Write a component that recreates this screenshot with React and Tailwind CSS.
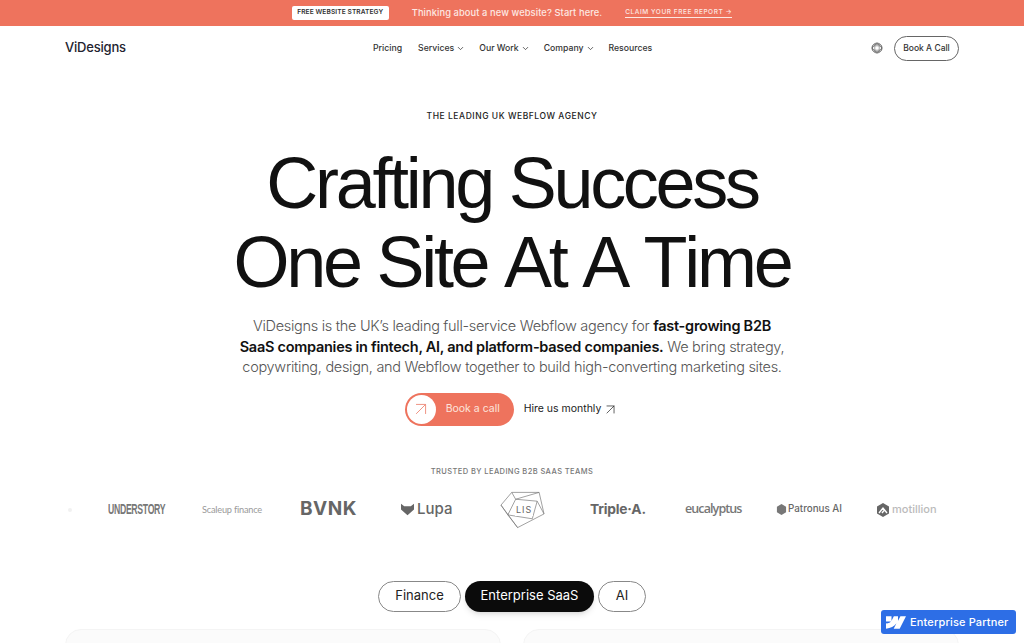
import React from 'react';
import { ArrowUpRight, ChevronDown } from 'lucide-react';

const navLinks = [
  { label: 'Pricing' },
  { label: 'Services', menu: true },
  { label: 'Our Work', menu: true },
  { label: 'Company', menu: true },
  { label: 'Resources' },
];

const Globe = () => (
  <svg viewBox="0 0 24 24" className="w-[12px] h-[12px]" fill="none" stroke="#666" strokeWidth="1.2">
    <circle cx="12" cy="12" r="10" />
    <ellipse cx="12" cy="12" rx="4.5" ry="10" />
    <ellipse cx="12" cy="12" rx="10" ry="4.5" />
    <ellipse cx="12" cy="12" rx="7.5" ry="10" transform="rotate(60 12 12)" />
    <ellipse cx="12" cy="12" rx="7.5" ry="10" transform="rotate(-60 12 12)" />
  </svg>
);

const Logos = () => (
  <div className="mt-[13px] h-[40px] flex items-center text-[#6f6f6f]">
    <div className="w-[68px]" />
    <span className="w-[40px] flex"><span className="w-[4px] h-[4px] rounded-full bg-[#f1f1f1]" /></span>
    <span className="w-[94px] text-[14px] font-bold tracking-[-0.5px] text-[#777] [font-family:'Liberation_Sans',sans-serif] scale-x-[0.62] origin-left whitespace-nowrap">UNDERSTORY</span>
    <span className="w-[98px] text-[9.2px] text-[#999] tracking-[-0.2px] [font-family:Lato,sans-serif]">Scaleup finance</span>
    <span className="w-[101px] text-[19px] font-bold tracking-[0.5px] text-[#666] [font-family:Inter,sans-serif]">BVNK</span>
    <span className="w-[99px] flex items-center gap-[3px] text-[15px] font-medium text-[#666] [font-family:Inter,sans-serif]">
      <svg viewBox="0 0 16 14" className="w-[13px] h-[13px]" fill="#666">
        <path d="M0 0 L4 3 H12 L16 0 V7 L8 14 L0 7 Z" />
      </svg>
      Lupa
    </span>
    <span className="relative w-[90px] h-[40px] flex items-center">
      <svg viewBox="0 0 46 38" className="w-[45px] h-[38px]" fill="none" stroke="#777" strokeWidth="0.7">
        <path d="M1 14 L12 1 L40 1 L45 23 L18 37 Z" />
        <path d="M12 1 L16 8 L40 1 M16 8 L38 10 L45 23 M16 8 L8 24 L18 37 M38 10 L33 28 M1 14 L8 24 L33 28" />
      </svg>
      <span className="absolute left-[15px] top-[13px] text-[9px] tracking-[1px] text-[#666] bg-white px-[1px] [font-family:Inter,sans-serif]">LIS</span>
    </span>
    <span className="w-[95px] text-[13.8px] font-bold tracking-[-0.2px] text-[#666] [font-family:Inter,sans-serif]">Triple·A.</span>
    <span className="w-[91px] text-[12.5px] font-semibold tracking-[-0.9px] text-[#777] [font-family:'Open_Sans',sans-serif]">eucalyptus</span>
    <span className="w-[100px] flex items-center gap-[1px] text-[9.8px] font-medium text-[#666] [font-family:Inter,sans-serif]">
      <svg viewBox="0 0 12 12" className="w-[11px] h-[11px]" fill="#777">
        <path d="M6 0 L11 3 V9 L6 12 L1 9 V3 Z" />
      </svg>
      Patronus AI
    </span>
    <span className="flex items-center gap-[2px] text-[11px] font-medium text-[#bbb] [font-family:Inter,sans-serif]">
      <svg viewBox="0 0 14 14" className="w-[14px] h-[14px]">
        <path d="M7 0 L13 3.5 V10.5 L7 14 L1 10.5 V3.5 Z" fill="#666" />
        <path d="M3 10 L7 5 L11 10 M6 10 L8 7.5" fill="none" stroke="#fff" strokeWidth="1.4" />
      </svg>
      motillion
    </span>
  </div>
);

export default function App() {
  return (
    <div className="relative h-[643px] w-full overflow-hidden bg-white text-[#111] [font-family:Inter,sans-serif]">
      {/* Banner */}
      <div className="h-[26px] bg-[#ee735d] flex items-center justify-center">
        <span className="bg-white rounded-[2px] h-[14px] w-[97px] flex items-center justify-center text-[6.6px] font-semibold tracking-[0.1px] text-[#333]">FREE WEBSITE STRATEGY</span>
        <span className="ml-[23px] text-[9.3px] font-medium tracking-[0.1px] text-[#fde8e3]">Thinking about a new website? Start here.</span>
        <span className="ml-[23px] text-[6.5px] font-medium tracking-[0.55px] text-[#fde8e3] border-b border-[#fde8e3]">CLAIM YOUR FREE REPORT →</span>
      </div>

      {/* Nav */}
      <header className="relative h-[44px] px-[65px] flex items-center justify-between">
        <div className="text-[13px] font-medium tracking-[-0.2px] text-[#23232f]">ViDesigns</div>
        <nav className="absolute left-[373px] top-0 h-[44px] flex items-center gap-[14px] text-[8.7px] font-medium text-[#333]">
          {navLinks.map((link) => (
            <span key={link.label} className="flex items-center gap-[2px] pt-[1px] first:mr-[2px]">
              {link.label}
              {link.menu && <ChevronDown className="w-[9px] h-[9px]" strokeWidth={2} />}
            </span>
          ))}
        </nav>
        <div className="flex items-center gap-[11px]">
          <Globe />
          <button className="h-[25px] w-[65px] rounded-full border border-[#666] text-[8.5px] font-medium text-[#333]">Book A Call</button>
        </div>
      </header>

      {/* Hero */}
      <main className="flex flex-col items-center">
        <p className="mt-[40px] text-[8.5px] leading-[12px] font-medium tracking-[0.55px] text-[#222]">THE LEADING UK WEBFLOW AGENCY</p>
        <h1 className="mt-[22px] text-center text-[72px] leading-[79px] font-normal tracking-[-3.3px] [font-kerning:none] text-[#111] [font-family:'Liberation_Sans',sans-serif]">
          Crafting Success
          <br />
          One Site At A Time
        </h1>
        <p className="mt-[14px] w-[552px] text-center text-[14.5px] leading-[20.5px] font-light tracking-[-0.3px] text-[#555]">
          ViDesigns is the UK’s leading full-service Webflow agency for <strong className="font-semibold tracking-[-0.27px] text-[#111]">fast-growing B2B SaaS companies in fintech, AI, and platform-based companies.</strong> We bring strategy, copywriting, design, and Webflow together to build high-converting marketing sites.
        </p>

        <div className="mt-[15px] flex items-center gap-[10px]">
          <button className="h-[33px] w-[109px] rounded-full bg-[#ee735d] flex items-center pl-[2px]">
            <span className="w-[29px] h-[29px] rounded-full bg-white flex items-center justify-center">
              <ArrowUpRight className="w-[22px] h-[22px] text-[#ee8a78]" strokeWidth={1} />
            </span>
            <span className="ml-[10px] text-[10.5px] text-[#fde3dc]">Book a call</span>
          </button>
          <span className="flex items-center gap-[1px] text-[10.5px] font-normal text-[#222]">
            Hire us monthly
            <ArrowUpRight className="w-[17px] h-[17px]" strokeWidth={1} />
          </span>
        </div>

        <p className="mt-[41px] text-[7.5px] leading-[10px] font-medium tracking-[0.4px] text-[#777]">TRUSTED BY LEADING B2B SAAS TEAMS</p>
      </main>

      <Logos />

      {/* Tabs */}
      <div className="mt-[51px] flex justify-center gap-[4px] text-[13px]">
        <button className="h-[31px] w-[83px] rounded-full border border-[#888] text-[#222]">Finance</button>
        <button className="h-[31px] w-[129px] rounded-full bg-[#0b0b0b] text-white shadow-md">Enterprise SaaS</button>
        <button className="h-[31px] w-[48px] rounded-full border border-[#888] text-[#222]">AI</button>
      </div>

      {/* Cards peeking at the fold */}
      <div className="mt-[17px] px-[65px] grid grid-cols-2 gap-[22px]">
        <div className="h-[40px] rounded-t-[16px] bg-[#fbfbfb] border border-[#f4f4f4]" />
        <div className="h-[40px] rounded-t-[16px] bg-[#fbfbfb] border border-[#f4f4f4]" />
      </div>

      {/* Webflow badge */}
      <div className="absolute left-[881px] top-[610px] h-[24px] w-[135px] rounded-[3px] bg-[#2d6ee6] flex items-center pl-[5px] gap-[4px]">
        <svg viewBox="0 0 24 15" className="w-[20px] h-[13px]" fill="#fff">
          <path d="M24 0 L16.4 15 H9.2 L12.4 8.8 H12.3 C9.7 12.2 5.8 14.5 0 15 V8.9 C0 8.9 3.7 8.7 5.9 6.4 H0 V0 H6.6 V5.4 H6.7 L9.4 0 H14.4 V5.4 H14.5 L17.3 0 Z" />
        </svg>
        <span className="text-[11px] font-medium tracking-[0.15px] text-white">Enterprise Partner</span>
      </div>
    </div>
  );
}
